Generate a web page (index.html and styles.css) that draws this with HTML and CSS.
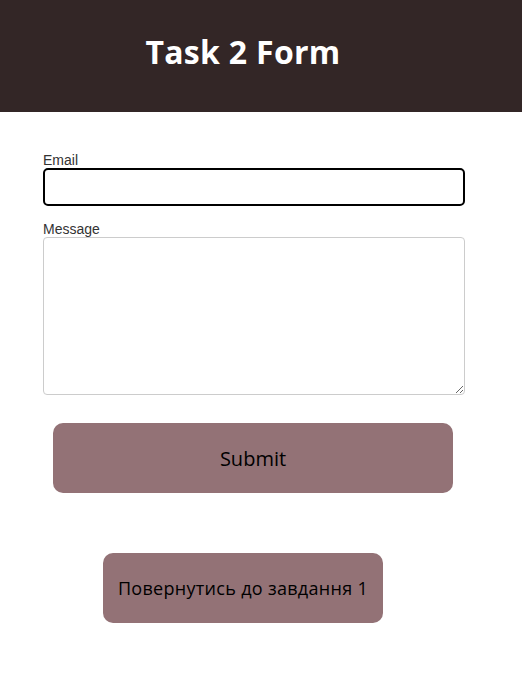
FILE: index.html
```html
<!DOCTYPE html>
<html lang="uk">
<head>
<meta charset="utf-8">
<title>Task 2 Form</title>
<link rel="stylesheet" href="styles.css">
</head>
<body>
<header class="site-header">
  <h1 class="title">Task 2 Form</h1>
</header>
<main class="content">
  <form class="form">
    <label class="label" for="email">Email</label>
    <input class="input" id="email" type="email">
    <label class="label label-msg" for="message">Message</label>
    <textarea class="textarea" id="message"></textarea>
    <button class="btn btn-submit" type="submit">Submit</button>
  </form>
  <a class="btn btn-back" href="#">Повернутись до завдання 1</a>
</main>
</body>
</html>
```
FILE: styles.css
```css
html, body {
  margin: 0;
  padding: 0;
  background: #ffffff;
}
body {
  font-family: "Open Sans", "DejaVu Sans", sans-serif;
}
.site-header {
  background: #332626;
  height: 112px;
  box-sizing: border-box;
  padding: 30px 36px 0 0;
}
.title {
  margin: 0;
  text-align: center;
  color: #ffffff;
  font-size: 32px;
  font-weight: 700;
  line-height: 44px;
  letter-spacing: 0.3px;
}
.content {
  padding: 40px 0 0 43px;
}
.form {
  width: 422px;
  display: flex;
  flex-direction: column;
}
.label {
  font-family: "Liberation Sans", Arial, sans-serif;
  font-size: 14px;
  color: #333333;
  line-height: 16px;
}
.label-msg {
  margin-top: 15px;
}
.input {
  box-sizing: border-box;
  height: 38px;
  border: 2px solid #000;
  border-radius: 5px;
  margin: 0;
  padding: 4px 8px;
  outline: none;
}
.textarea {
  box-sizing: border-box;
  height: 158px;
  border: 1px solid #cccccc;
  border-radius: 4px;
  margin: 0;
  resize: vertical;
}
.btn {
  box-sizing: border-box;
  display: flex;
  align-items: center;
  justify-content: center;
  background: #937276;
  color: #000;
  border: none;
  border-radius: 10px;
  height: 70px;
  font-family: "Open Sans", "DejaVu Sans", sans-serif;
  font-weight: 500;
  text-decoration: none;
}
.btn-submit {
  width: 400px;
  margin: 28px 0 0 10px;
  font-size: 20px;
}
.btn-back {
  width: 280px;
  margin: 60px 0 0 60px;
  font-size: 18px;
  letter-spacing: 0.3px;
}
```
